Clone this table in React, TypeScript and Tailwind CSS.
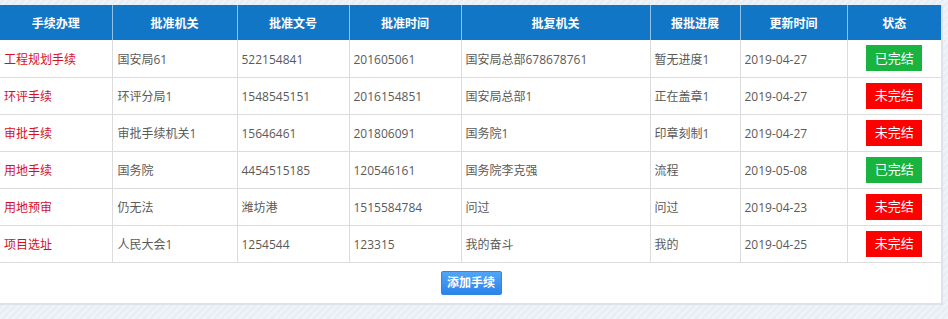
import React from "react";

type Row = {
  name: string;
  org: string;
  docNo: string;
  date: string;
  replyOrg: string;
  progress: string;
  updated: string;
  done: boolean;
};

const rows: Row[] = [
  { name: "工程规划手续", org: "国安局61", docNo: "522154841", date: "201605061", replyOrg: "国安局总部678678761", progress: "暂无进度1", updated: "2019-04-27", done: true },
  { name: "环评手续", org: "环评分局1", docNo: "1548545151", date: "2016154851", replyOrg: "国安局总部1", progress: "正在盖章1", updated: "2019-04-27", done: false },
  { name: "审批手续", org: "审批手续机关1", docNo: "15646461", date: "201806091", replyOrg: "国务院1", progress: "印章刻制1", updated: "2019-04-27", done: false },
  { name: "用地手续", org: "国务院", docNo: "4454515185", date: "120546161", replyOrg: "国务院李克强", progress: "流程", updated: "2019-05-08", done: true },
  { name: "用地预审", org: "仍无法", docNo: "潍坊港", date: "1515584784", replyOrg: "问过", progress: "问过", updated: "2019-04-23", done: false },
  { name: "项目选址", org: "人民大会1", docNo: "1254544", date: "123315", replyOrg: "我的奋斗", progress: "我的", updated: "2019-04-25", done: false },
];

const headers = ["手续办理", "批准机关", "批准文号", "批准时间", "批复机关", "报批进展", "更新时间", "状态"];
const widths = [112, 125, 112, 112, 189, 90, 107, 94];

export default function App() {
  return (
    <div
      className="w-[948px] h-[319px] pt-[5px] bg-[repeating-linear-gradient(-45deg,#eef3f8_0px,#eef3f8_3px,#e6edf4_3px,#e6edf4_5px)]"
      style={{ fontFamily: '"Open Sans", "Noto Sans CJK SC", sans-serif' }}
    >
      <div className="w-[943px] bg-white border-r-2 border-b-2 border-[#dde2e8]">
        <table className="w-[941px] table-fixed border-collapse text-[12px]">
          <colgroup>
            {widths.map((w, i) => (
              <col key={i} style={{ width: w }} />
            ))}
          </colgroup>
          <thead>
            <tr className="h-[35px] bg-[#1276c6]">
              {headers.map((h, i) => (
                <th
                  key={h}
                  className={`font-bold text-white text-center p-0 pt-[2px] ${i > 0 ? "border-l border-[#8fc0e8]" : ""}`}
                >
                  {h}
                </th>
              ))}
            </tr>
          </thead>
          <tbody>
            {rows.map((r) => (
              <tr key={r.name} className="h-[37px] border-b border-[#dcdcdc] text-[#5a5a5a]">
                <td className="pl-[4px] pt-[3px] text-[#d7101d]">{r.name}</td>
                <td className="pl-[5px] pt-[3px] border-l border-[#dcdcdc]">{r.org}</td>
                <td className="pl-[4px] pt-[3px] border-l border-[#dcdcdc]">{r.docNo}</td>
                <td className="pl-[4px] pt-[3px] border-l border-[#dcdcdc]">{r.date}</td>
                <td className="pl-[4px] pt-[3px] border-l border-[#dcdcdc]">{r.replyOrg}</td>
                <td className="pl-[4px] pt-[3px] border-l border-[#dcdcdc]">{r.progress}</td>
                <td className="pl-[4px] pt-[3px] border-l border-[#dcdcdc]">{r.updated}</td>
                <td className="border-l border-[#dcdcdc] text-center">
                  <span
                    className={`inline-flex items-center justify-center w-[56px] h-[26px] align-middle text-white text-[13px] ${
                      r.done ? "bg-[#19b43f]" : "bg-[#ff0000]"
                    }`}
                  >
                    {r.done ? "已完结" : "未完结"}
                  </span>
                </td>
              </tr>
            ))}
          </tbody>
        </table>
        <div className="flex justify-center py-2">
          <button className="h-[24px] w-[61px] ml-[1px] rounded-[2px] border border-[#2f86e6] bg-gradient-to-b from-[#51a5f7] to-[#2b83ea] text-white text-[12px] font-bold">
            添加手续
          </button>
        </div>
      </div>
    </div>
  );
}
